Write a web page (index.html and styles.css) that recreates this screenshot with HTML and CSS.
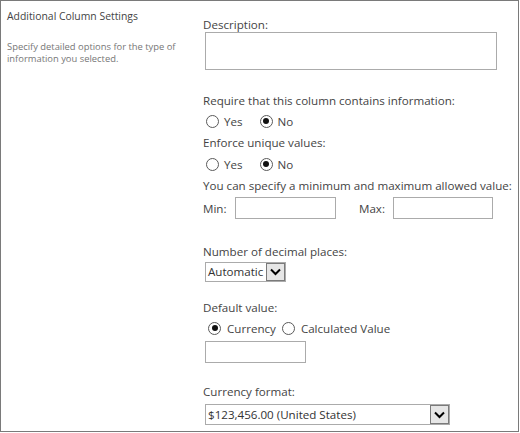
FILE: index.html
```html
<!DOCTYPE html>
<html>
<head>
<meta charset="utf-8">
<link rel="stylesheet" href="styles.css">
</head>
<body>
<div class="panel">
  <div class="side">
    <div class="side-title">Additional Column Settings</div>
    <div class="side-desc">Specify detailed options for the type of information you selected.</div>
  </div>
  <div class="main">
    <div class="label">Description:</div>
    <div class="textarea"></div>

    <div class="label m-require">Require that this column contains information:</div>
    <div class="radio-row">
      <span class="opt"><span class="radio"></span><span class="opt-text">Yes</span></span>
      <span class="opt opt-second"><span class="radio checked"></span><span class="opt-text">No</span></span>
    </div>

    <div class="label m-small">Enforce unique values:</div>
    <div class="radio-row radio-row-2">
      <span class="opt"><span class="radio"></span><span class="opt-text">Yes</span></span>
      <span class="opt opt-second"><span class="radio checked"></span><span class="opt-text">No</span></span>
    </div>

    <div class="label m-small">You can specify a minimum and maximum allowed value:</div>
    <div class="minmax">
      <span class="mm-label">Min:</span>
      <span class="field field-min"></span>
      <span class="mm-label mm-max">Max:</span>
      <span class="field field-max"></span>
    </div>

    <div class="label m-decimal">Number of decimal places:</div>
    <div class="select select-auto">
      <span class="select-text">Automatic</span>
      <span class="select-btn"><svg width="11" height="8" viewBox="0 0 11 8"><polyline points="1,1.5 5.5,6 10,1.5" fill="none" stroke="#000" stroke-width="2"/></svg></span>
    </div>

    <div class="label m-default">Default value:</div>
    <div class="radio-row radio-row-cur">
      <span class="opt"><span class="radio checked"></span><span class="opt-text">Currency</span></span>
      <span class="opt opt-calc"><span class="radio"></span><span class="opt-text">Calculated Value</span></span>
    </div>
    <div class="field field-default"></div>

    <div class="label m-format">Currency format:</div>
    <div class="select select-format">
      <span class="select-text">$123,456.00 (United States)</span>
      <span class="select-btn"><svg width="11" height="8" viewBox="0 0 11 8"><polyline points="1,1.5 5.5,6 10,1.5" fill="none" stroke="#000" stroke-width="2"/></svg></span>
    </div>
  </div>
</div>
</body>
</html>
```

FILE: styles.css
```css
html, body {
  margin: 0;
  padding: 0;
  background: #fff;
}

body {
  font-family: "Open Sans", "Noto Sans", sans-serif;
  color: #444;
}

.panel {
  width: 519px;
  height: 432px;
  box-sizing: border-box;
  border: 1px solid #7a7a7a;
  display: flex;
  background: #fff;
}

.side {
  width: 196px;
  flex: none;
  box-sizing: border-box;
  padding: 7px 0 0 6px;
}

.side-title {
  font-size: 10.4px;
  line-height: 16px;
  color: #444;
  white-space: nowrap;
}

.side-desc {
  margin-top: 17px;
  font-size: 9.4px;
  line-height: 12px;
  color: #777;
  width: 176px;
}

.main {
  flex: 1;
  padding: 16px 0 0 6px;
}

.label {
  font-size: 11.6px;
  line-height: 16px;
  color: #444;
  white-space: nowrap;
}

.textarea {
  width: 290px;
  height: 36px;
  border: 1px solid #ababab;
  margin: -1px 0 0 2px;
}

.m-require { margin-top: 23px; }
.m-small { margin-top: 4px; }
.m-decimal { margin-top: 25px; }
.m-default { margin-top: 18px; }
.m-format { margin-top: 21px; }

.radio-row {
  display: flex;
  align-items: center;
  height: 20px;
  margin-top: 2px;
  padding-left: 3px;
  font-size: 11.6px;
}

.radio-row-2 { margin-top: 3px; }

.opt {
  display: flex;
  align-items: center;
}

.opt-second { margin-left: 17px; }

.radio {
  width: 11px;
  height: 11px;
  border: 1px solid #5a5a5a;
  border-radius: 50%;
  position: relative;
  flex: none;
  background: #fff;
}

.radio.checked::after {
  content: "";
  position: absolute;
  left: 2.5px;
  top: 2.5px;
  width: 6px;
  height: 6px;
  border-radius: 50%;
  background: #111;
}

.opt-text {
  margin-left: 5px;
}

.radio-row-cur {
  padding-left: 5px;
}

.radio-row-cur .opt-text { margin-left: 6px; }

.opt-calc { margin-left: 6px; }

.minmax {
  display: flex;
  align-items: center;
  margin-top: 3px;
  height: 22px;
  font-size: 11.6px;
}

.mm-label {
  width: 32px;
}

.mm-max {
  margin-left: 23px;
  width: 34px;
}

.field {
  display: block;
  box-sizing: border-box;
  height: 22px;
  border: 1px solid #ababab;
  background: #fff;
}

.field-min { width: 101px; }
.field-max { width: 100px; }

.field-default {
  width: 101px;
  margin: 3px 0 0 2px;
}

.select {
  display: flex;
  align-items: stretch;
  box-sizing: border-box;
  height: 20px;
  border: 1px solid #ababab;
  margin-left: 2px;
  font-size: 11.6px;
  background: #fff;
}

.select-auto {
  width: 81px;
  margin-top: 2px;
}

.select-format {
  width: 245px;
  margin-top: 4px;
  height: 21px;
}

.select-text {
  flex: 1;
  padding-left: 2px;
  line-height: 18px;
  color: #333;
  white-space: nowrap;
  overflow: hidden;
}

.select-format .select-text { line-height: 19px; }

.select-btn {
  width: 17px;
  flex: none;
  border: 1px solid #7a7a7a;
  background: #e6e6e6;
  display: flex;
  align-items: center;
  justify-content: center;
}
```
